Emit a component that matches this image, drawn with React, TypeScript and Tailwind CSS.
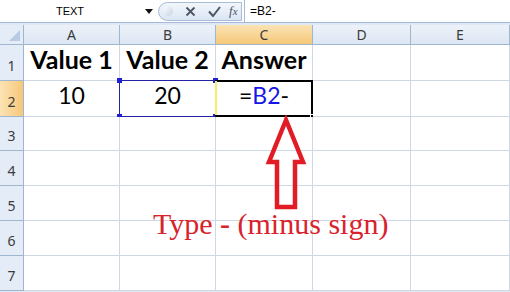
const cols = ["A", "B", "C", "D", "E"];
const colWidths = "grid-cols-[24px_96px_96px_97px_98px_99px]";
const cellFont = { fontFamily: "Lato, 'Open Sans', sans-serif" };

function HeaderCell({ label, active }: { label: string; active?: boolean }) {
  return (
    <div
      className={
        "flex items-center justify-center border-r border-b border-[#9eb6ce] text-[14px] text-[#3b3b3b] " +
        (active
          ? "bg-gradient-to-b from-[#fbe3b4] to-[#f6c878]"
          : "bg-gradient-to-b from-[#edf2f9] to-[#dce6f3]")
      }
    >
      {label}
    </div>
  );
}

function RowHeader({ n, active }: { n: number; active?: boolean }) {
  return (
    <div
      className={
        "flex items-end justify-center pb-[4px] border-r border-b border-[#9eb6ce] text-[14px] text-[#3b3b3b] " +
        (active
          ? "bg-gradient-to-r from-[#fbe3b4] to-[#f6c878]"
          : "bg-[#e4ecf7]")
      }
    >
      {n}
    </div>
  );
}

function Cell({ children, className = "" }: { children?: React.ReactNode; className?: string }) {
  return (
    <div className={"relative flex items-end justify-center border-r border-b border-[#d0d7e5] bg-white " + className}>
      {children}
    </div>
  );
}

function FormulaBar() {
  return (
    <div className="flex h-[23px] items-center border-b border-[#a5b8d4] bg-white" style={{ fontFamily: "'Liberation Sans', Arial, sans-serif" }}>
      <div className="flex w-[140px] justify-center text-[11px] text-black">TEXT</div>
      <div className="flex w-[18px] justify-center">
        <svg width="8" height="5" viewBox="0 0 8 5">
          <path d="M0 0h8L4 5z" fill="#111" />
        </svg>
      </div>
      <div className="flex h-[19px] w-[84px] items-center rounded-l-full rounded-r-[3px] border border-[#a9bbd5] bg-gradient-to-b from-[#f2f6fc] to-[#dbe6f4]">
        <div className="ml-[4px] h-[10px] w-[10px] rounded-full bg-gradient-to-br from-[#ffffff] to-[#c6d2e3]" />
        <svg className="ml-[12px]" width="11" height="11" viewBox="0 0 11 11">
          <path d="M1.5 1.5l8 8M9.5 1.5l-8 8" stroke="#4b5563" strokeWidth="1.8" />
        </svg>
        <svg className="ml-[12px]" width="13" height="11" viewBox="0 0 13 11">
          <path d="M1 5.5l4 4.5L12 1" stroke="#4b5563" strokeWidth="2" fill="none" />
        </svg>
        <span className="ml-[8px] text-[13px] italic text-[#4b5563]" style={{ fontFamily: "'Liberation Serif', serif" }}>
          f<span className="text-[11px]">x</span>
        </span>
      </div>
      <div className="ml-[2px] h-[23px] w-px bg-[#a5b8d4]" />
      <div className="pl-[5px] text-[12px] text-black">=B2-</div>
    </div>
  );
}

export default function App() {
  return (
    <div className="relative h-[292px] w-[510px] overflow-hidden bg-[#dfe8f5]">
      <FormulaBar />
      <div className="h-[2px]" />
      <div className={"grid " + colWidths + " grid-rows-[20px_36px_36px_34px_35px_35px_35px_35px]"}>
        <div className="relative border-r border-b border-[#9eb6ce] bg-[#e4ecf7]">
          <svg className="absolute right-[3px] bottom-[3px]" width="11" height="11" viewBox="0 0 11 11">
            <path d="M11 0v11H0z" fill="#b9cbe2" />
          </svg>
        </div>
        {cols.map((c) => (
          <HeaderCell key={c} label={c} active={c === "C"} />
        ))}

        <RowHeader n={1} />
        <Cell className="pb-[2px] text-[25px] font-bold text-black">
          <span style={cellFont}>Value 1</span>
        </Cell>
        <Cell className="pb-[2px] text-[25px] font-bold text-black">
          <span style={cellFont}>Value 2</span>
        </Cell>
        <Cell className="pb-[2px] text-[25px] font-bold text-black">
          <span style={cellFont}>Answer</span>
        </Cell>
        <Cell />
        <Cell />

        <RowHeader n={2} active />
        <Cell className="pb-[4px] text-[23px] text-black">
          <span style={cellFont}>10</span>
        </Cell>
        <Cell className="pb-[4px] text-[23px] text-black">
          <span style={cellFont}>20</span>
          <div className="pointer-events-none absolute -top-px -left-px -right-px -bottom-px border border-[#2323a8]">
            <div className="absolute -top-[3px] -left-[3px] h-[5px] w-[5px] bg-[#1f1fd6]" />
            <div className="absolute -bottom-[3px] -left-[3px] h-[5px] w-[5px] bg-[#1f1fd6]" />
            <div className="absolute -top-[3px] -right-[3px] h-[5px] w-[5px] bg-[#1f1fd6]" />
            <div className="absolute -bottom-[3px] -right-[3px] h-[5px] w-[5px] bg-[#1f1fd6]" />
          </div>
        </Cell>
        <Cell className="pb-[4px] text-[23px] text-black">
          <span style={cellFont}>
            =<span className="text-[#1515e6]">B2</span>-
          </span>
          <div className="pointer-events-none absolute -top-px -left-px -right-px -bottom-px border-2 border-black">
            <div className="absolute -top-[1px] -left-[2px] h-[34px] w-[2px] bg-[#f7f06a]" />
            <div className="absolute -right-[4px] -bottom-[4px] h-[5px] w-[5px] border border-white bg-black" />
          </div>
        </Cell>
        <Cell />
        <Cell />

        {[3, 4, 5, 6, 7].map((n) => (
          <div key={n} className="contents">
            <RowHeader n={n} />
            <Cell />
            <Cell />
            <Cell />
            <Cell />
            <Cell />
          </div>
        ))}
      </div>

      {/* annotation drawn over the sheet */}
      <svg className="absolute left-[262px] top-[115px]" width="48" height="96" viewBox="0 0 48 96">
        <path d="M24 5L7 47h8v45h18V47h8z" fill="none" stroke="#e21c25" strokeWidth="4.5" strokeLinejoin="miter" />
      </svg>
      <div
        className="absolute left-[153px] top-[209px] text-[30px] leading-none text-[#d8232c]"
        style={{ fontFamily: "'Liberation Serif', 'Times New Roman', serif" }}
      >
        Type <span className="font-bold">-</span> (minus sign)
      </div>
    </div>
  );
}
